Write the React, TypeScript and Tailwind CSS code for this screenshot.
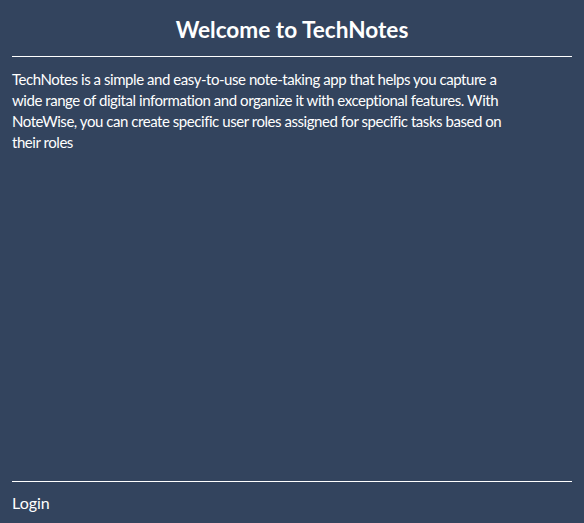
export default function App() {
  return (
    <div
      className="flex h-[523px] w-[584px] flex-col bg-[#33445e] px-3 text-white"
      style={{ fontFamily: "Lato, 'Noto Sans', sans-serif" }}
    >
      <header className="flex h-[57px] items-center justify-center border-b border-white pt-[3px]">
        <h1 className="text-[22.6px] font-bold">Welcome to TechNotes</h1>
      </header>
      <main className="flex-1 pt-3">
        <p className="max-w-[512px] text-[15px] leading-[21px] tracking-[-0.45px]">
          TechNotes is a simple and easy-to-use note-taking app that helps you
          capture a wide range of digital information and organize it with
          exceptional features. With NoteWise, you can create specific user
          roles assigned for specific tasks based on their roles
        </p>
      </main>
      <footer className="flex h-[42px] items-center border-t border-white">
        <span className="text-[16px]">Login</span>
      </footer>
    </div>
  );
}
